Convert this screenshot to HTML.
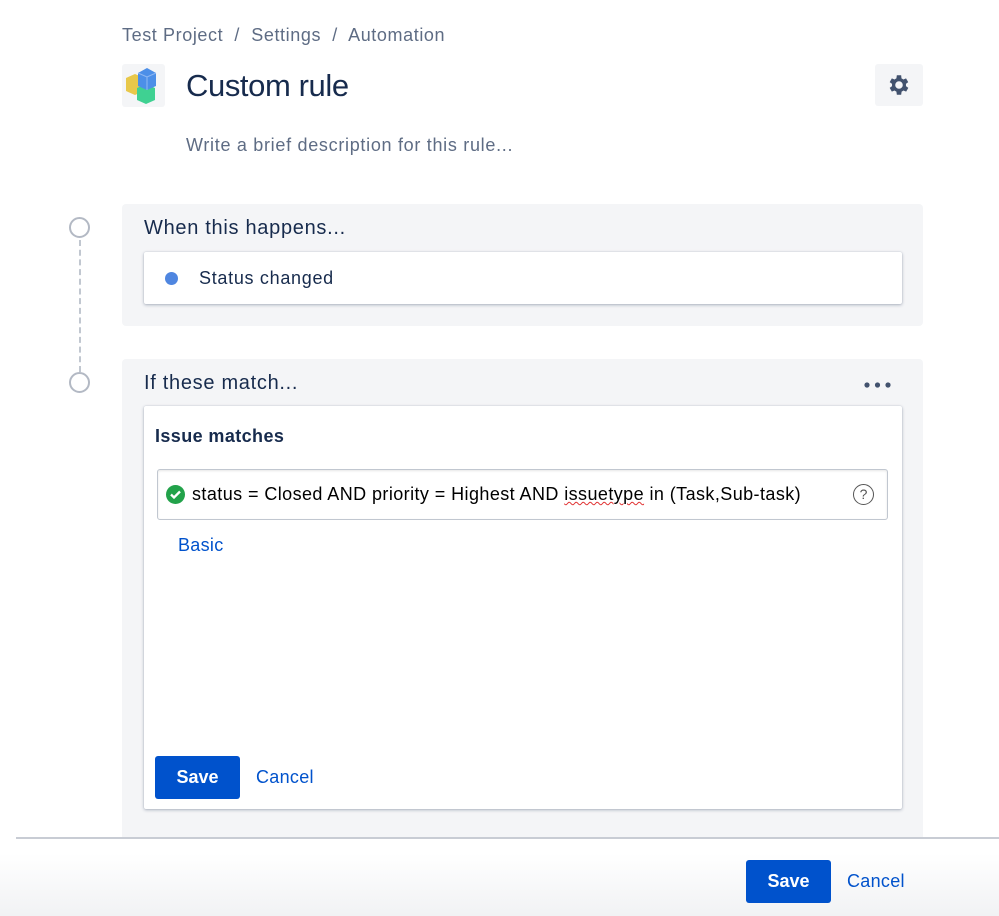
<!DOCTYPE html>
<html><head><meta charset="utf-8"><style>
*{box-sizing:border-box;margin:0;padding:0}
body{width:999px;height:916px;background:#fff;font-family:"Liberation Sans",sans-serif;color:#172b4d;position:relative;overflow:hidden}
.a{position:absolute}
.crumb{left:122px;top:25px;font-size:18px;color:#5e6c84;letter-spacing:0.6px}
.logo{left:122px;top:64px;width:43px;height:43px;background:#f4f5f7;border-radius:3px}
.title{left:186px;top:68px;font-size:31px;font-weight:500;color:#172b4d;letter-spacing:-0.4px}
.gear{left:875px;top:64px;width:48px;height:42px;background:#f4f5f7;border-radius:3px;display:flex;align-items:center;justify-content:center}
.desc{left:186px;top:135px;font-size:18px;color:#5e6c84;letter-spacing:0.7px}
.panel{background:#f4f5f7;border-radius:4px}
.circ{width:21px;height:21px;border:2.5px solid #b3b9c4;border-radius:50%;background:#fff}
.card{background:#fff;box-shadow:0 1px 3px rgba(9,30,66,.3),0 0 1px rgba(9,30,66,.2);border-radius:2px}
.h{font-size:20px;color:#172b4d;letter-spacing:0.7px}
.btn{background:#0052cc;color:#fff;font-size:18px;font-weight:bold;border-radius:3px;display:flex;align-items:center;justify-content:center}
.link{color:#0052cc;font-size:18px;letter-spacing:0.3px}
</style></head><body>
<div class="a crumb">Test Project &nbsp;/&nbsp; Settings &nbsp;/&nbsp; Automation</div>
<div class="a logo"><svg width="43" height="43" viewBox="0 0 43 43">
<path d="M4 14l9-4 9 4v13l-9 4-9-4z" fill="#e8c84a"/>
<path d="M15 24l9-4 9 4v12l-9 4-9-4z" fill="#3fd192"/>
<path d="M16 9l9-5 9 5v13l-9 4-9-4z" fill="#4c8fe8"/>
<path d="M16 9l9 4 9-4M25 13v13" fill="none" stroke="#8fb8f2" stroke-width="1"/>
</svg></div>
<div class="a title">Custom rule</div>
<div class="a gear"><svg width="26" height="26" viewBox="0 0 24 24"><path fill="#42526e" d="M19.4 13a7.5 7.5 0 000-2l2.1-1.6-2-3.5-2.5 1a7.4 7.4 0 00-1.7-1L15 3h-4l-.4 2.9a7.4 7.4 0 00-1.7 1l-2.5-1-2 3.5L6.6 11a7.5 7.5 0 000 2l-2.2 1.6 2 3.5 2.5-1a7.4 7.4 0 001.7 1L11 21h4l.4-2.9a7.4 7.4 0 001.7-1l2.5 1 2-3.5zM13 15.5a3.5 3.5 0 110-7 3.5 3.5 0 010 7z" transform="translate(-1 0)"/></svg></div>
<div class="a desc">Write a brief description for this rule...</div>

<div class="a" style="left:79px;top:240px;height:132px;border-left:2px dashed #c1c7d0"></div>
<div class="a circ" style="left:69px;top:217px"></div>
<div class="a circ" style="left:69px;top:372px"></div>

<div class="a panel" style="left:122px;top:204px;width:801px;height:122px"></div>
<div class="a h" style="left:144px;top:217px">When this happens...</div>
<div class="a card" style="left:144px;top:252px;width:758px;height:52px"></div>
<div class="a" style="left:165px;top:272px;width:13px;height:13px;border-radius:50%;background:#4f86e0"></div>
<div class="a" style="left:199px;top:268px;font-size:18px;letter-spacing:0.7px">Status changed</div>

<div class="a panel" style="left:122px;top:359px;width:801px;height:480px;border-radius:4px 4px 0 0"></div>
<div class="a h" style="left:144px;top:372px">If these match...</div>
<svg class="a" style="left:864px;top:380px" width="28" height="10"><circle cx="3" cy="5" r="2.6" fill="#42526e"/><circle cx="13.5" cy="5" r="2.6" fill="#42526e"/><circle cx="24" cy="5" r="2.6" fill="#42526e"/></svg>
<div class="a card" style="left:144px;top:406px;width:758px;height:403px"></div>
<div class="a" style="left:155px;top:426px;font-size:18px;font-weight:bold;letter-spacing:0.4px">Issue matches</div>
<div class="a" style="left:157px;top:469px;width:731px;height:51px;border:1px solid #c1c7d0;border-radius:3px;box-shadow:inset 0 1px 2px rgba(0,0,0,.1)"></div>
<div class="a" style="left:166px;top:485px;width:19px;height:19px;border-radius:50%;background:#22a24a"><svg width="19" height="19" viewBox="0 0 19 19"><path d="M5 9.5l3 3 6-6" fill="none" stroke="#fff" stroke-width="2.3"/></svg></div>
<div class="a" style="left:192px;top:484px;font-size:18px;color:#000;letter-spacing:0.42px">status = Closed AND priority = Highest AND <span style="text-decoration:underline wavy #e03030;text-decoration-thickness:1px">issuetype</span> in (Task,Sub-task)</div>
<div class="a" style="left:853px;top:484px;width:21px;height:21px;border:1.6px solid #555;border-radius:50%;font-size:14px;text-align:center;line-height:18px;color:#555">?</div>
<div class="a link" style="left:178px;top:535px">Basic</div>
<div class="a btn" style="left:155px;top:756px;width:85px;height:43px">Save</div>
<div class="a link" style="left:256px;top:767px">Cancel</div>

<div class="a" style="left:0;top:838px;width:999px;height:78px;background:linear-gradient(#fff 20%,#f1f2f4)"></div>
<div class="a" style="left:16px;top:837px;width:983px;height:2px;background:#c8ccd4"></div>
<div class="a btn" style="left:746px;top:860px;width:85px;height:43px">Save</div>
<div class="a link" style="left:847px;top:871px">Cancel</div>
</body></html>
